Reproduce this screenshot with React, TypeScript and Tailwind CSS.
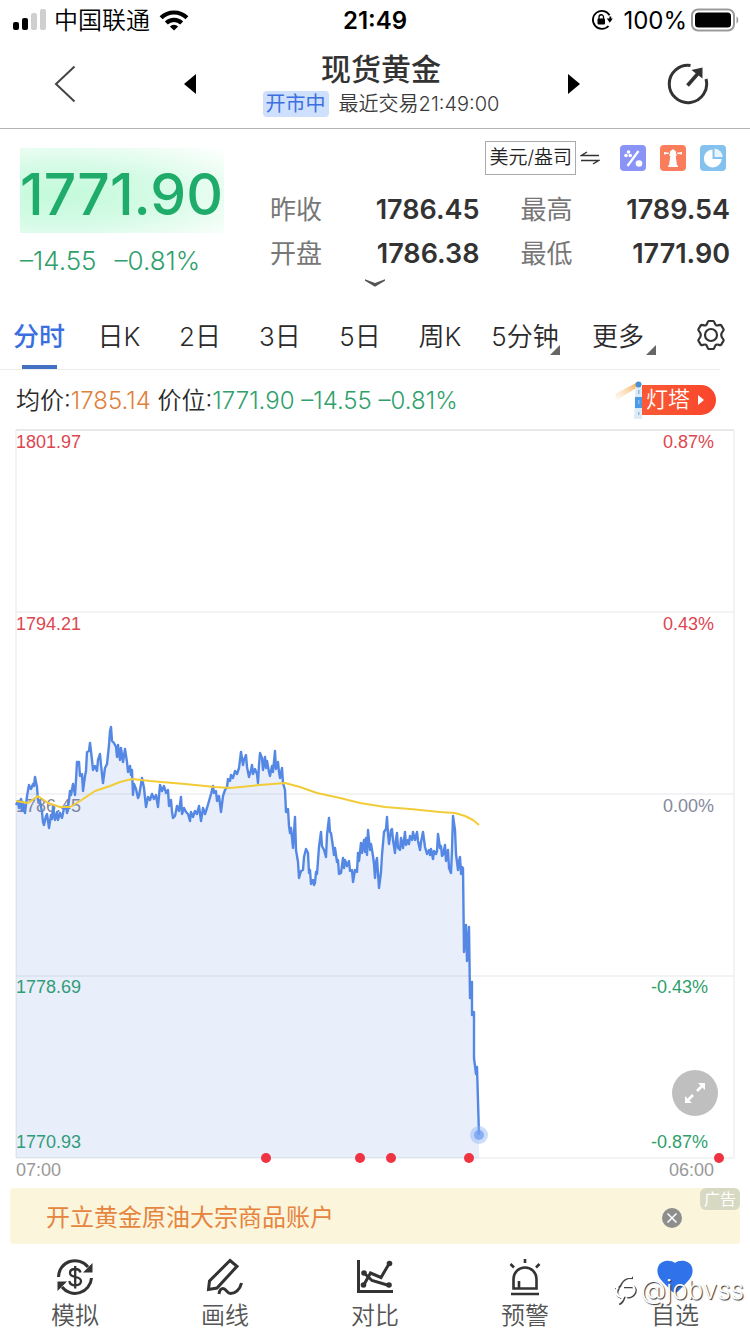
import type { ReactNode } from "react";

const FONT = "font-['Inter','Noto_Sans_CJK_SC',sans-serif]";
const CHART_FONT = "font-['Liberation_Sans',Arial,sans-serif]";

const PRICE: number[][] = [
  [16, 805], [18, 801], [19, 808], [21, 799], [22, 811], [23, 802], [25, 813], [27, 796], [29, 785], [31, 789], [33, 784], [34, 786], [35, 777], [37, 787], [38, 800], [40, 801],
  [42, 812], [43, 822], [44, 825], [46, 816], [47, 814], [49, 828], [51, 815], [52, 819], [53, 806], [55, 820], [57, 812], [58, 820], [60, 813], [62, 818], [64, 808], [66, 806],
  [67, 813], [69, 800], [70, 791], [71, 795], [73, 784], [75, 795], [76, 780], [77, 762], [79, 762], [80, 776], [82, 774], [83, 791], [85, 776], [86, 771], [87, 752], [89, 751],
  [90, 743], [92, 760], [93, 770], [95, 766], [97, 771], [98, 760], [100, 754], [101, 765], [103, 783], [105, 768], [107, 764], [109, 745], [110, 731], [111, 727], [112, 741], [114, 743],
  [116, 747], [117, 757], [118, 745], [120, 760], [121, 748], [123, 762], [125, 749], [127, 762], [128, 772], [130, 766], [131, 775], [132, 770], [133, 795], [134, 784], [136, 789], [138, 798],
  [139, 796], [142, 778], [144, 788], [146, 807], [148, 797], [150, 800], [152, 794], [154, 799], [156, 795], [158, 807], [160, 785], [162, 791], [164, 786], [166, 793], [168, 790], [169, 806],
  [171, 800], [172, 812], [173, 818], [175, 816], [177, 806], [179, 811], [181, 797], [182, 814], [184, 808], [186, 812], [188, 814], [190, 821], [191, 812], [193, 817], [195, 811], [197, 814],
  [199, 806], [201, 821], [203, 808], [205, 814], [207, 808], [209, 801], [211, 794], [213, 786], [214, 793], [216, 791], [217, 801], [219, 796], [221, 812], [223, 796], [225, 790], [227, 787],
  [228, 779], [230, 781], [231, 775], [233, 778], [235, 771], [237, 774], [239, 768], [241, 752], [243, 765], [244, 760], [246, 755], [247, 767], [249, 777], [251, 770], [252, 765], [253, 774],
  [255, 769], [257, 774], [258, 783], [259, 765], [260, 753], [262, 758], [263, 770], [265, 757], [266, 768], [267, 761], [269, 772], [270, 776], [272, 766], [273, 772], [275, 751], [276, 769],
  [278, 762], [279, 772], [280, 778], [282, 768], [283, 783], [285, 790], [286, 812], [288, 809], [289, 826], [290, 833], [291, 828], [293, 848], [295, 817], [296, 850], [298, 862], [299, 878],
  [301, 871], [303, 870], [304, 857], [306, 849], [308, 853], [309, 873], [310, 870], [311, 884], [313, 880], [314, 885], [315, 883], [316, 872], [317, 874], [319, 847], [321, 832], [322, 846],
  [324, 850], [326, 857], [327, 835], [329, 818], [330, 832], [331, 833], [333, 847], [334, 855], [335, 848], [337, 862], [338, 860], [339, 874], [341, 873], [343, 858], [344, 868], [345, 860],
  [347, 866], [349, 861], [350, 871], [352, 870], [353, 882], [355, 870], [357, 872], [358, 853], [359, 861], [361, 843], [362, 853], [364, 840], [365, 852], [366, 838], [367, 855], [368, 830],
  [370, 850], [371, 844], [373, 856], [374, 864], [375, 878], [376, 862], [377, 858], [378, 874], [379, 888], [381, 872], [382, 855], [384, 832], [386, 829], [387, 817], [388, 834], [389, 844],
  [391, 830], [392, 829], [393, 840], [395, 853], [396, 839], [397, 833], [398, 848], [400, 850], [401, 838], [403, 848], [405, 832], [406, 845], [408, 840], [409, 844], [410, 836], [412, 840],
  [413, 832], [415, 840], [417, 832], [418, 841], [420, 850], [421, 842], [423, 832], [425, 847], [427, 854], [429, 850], [430, 855], [431, 849], [433, 859], [434, 851], [436, 854], [437, 851],
  [438, 834], [440, 848], [441, 846], [442, 856], [443, 855], [445, 845], [446, 861], [448, 850], [449, 868], [451, 873], [452, 850], [453, 816], [455, 830], [456, 854], [458, 870], [459, 861],
  [460, 857], [461, 874], [462, 867], [463, 868], [464, 952], [466, 925], [467, 961], [469, 927], [470, 998], [472, 982], [472, 1015], [474, 1012], [474, 1058], [476, 1074], [477, 1067], [479, 1135],
];

const AVERAGE: number[][] = [
  [16, 801], [28, 803], [38, 796], [48, 803], [60, 807], [70, 807], [80, 801], [95, 791], [110, 786], [120, 782],
  [132, 779], [150, 781], [185, 784], [215, 787], [230, 788], [260, 785], [285, 783], [300, 787], [317, 793],
  [340, 798], [360, 803], [385, 807], [410, 809], [440, 812], [455, 813], [465, 816], [473, 820], [479, 825],
];

const toPath = (pts: number[][]) => "M" + pts.map((p) => p.join(" ")).join("L");

function StatusBar() {
  return (
    <div className="grid h-10 grid-cols-3 items-center text-2xl leading-8 text-black">
      <div className="flex items-center gap-2 pl-3">
        <svg width="34" height="22" viewBox="0 0 34 22" aria-hidden="true">
          <rect x="1" y="13" width="6" height="8" rx="2" />
          <rect x="10" y="9" width="6" height="12" rx="2" />
          <rect x="19" y="4" width="6" height="17" rx="2" fill="#cfcfcf" />
          <rect x="28" y="0" width="6" height="21" rx="2" fill="#cfcfcf" />
        </svg>
        <span className="pt-0.5 font-[350] whitespace-nowrap">中国联通</span>
        <svg width="32" height="22" viewBox="0 0 32 23" fill="none" stroke="#000" strokeWidth="4.4" aria-hidden="true">
          <path d="M2.5 9.2a19.2 19.2 0 0 1 27 0" />
          <path d="M8 14.6a11.400 11.400 0 0 1 16 0" />
          <path d="M16 22.500l-4.300-4.300a6.100 6.100 0 0 1 8.600 0z" fill="#000" stroke="none" />
        </svg>
      </div>
      <div className="pt-0.5 text-center font-semibold">21:49</div>
      <div className="flex items-center justify-end pr-2.5">
        <svg width="22" height="22" viewBox="0 0 22 22" className="mr-2.5" aria-hidden="true">
          <path d="M18.600 6.200A9 9 0 1 0 17.500 17" fill="none" stroke="#000" strokeWidth="1.800" />
          <path d="M19.300 7.500v3.500" stroke="#000" strokeWidth="1.800" />
          <path d="M15.800 9.500h6L18.800 13.800z" />
          <rect x="6.500" y="9.500" width="7.500" height="6" rx="1" />
          <path d="M8 10V8a2.250 2.250 0 0 1 4.500 0v2" fill="none" stroke="#000" strokeWidth="1.300" />
        </svg>
        <span className="pt-0.5">100%</span>
        <svg width="49" height="24" viewBox="0 0 49 24" className="ml-1" aria-hidden="true">
          <rect x="1" y="1.500" width="42" height="21" rx="6" fill="none" stroke="#9a9a9a" strokeWidth="2" />
          <rect x="4" y="4.500" width="36" height="15" rx="3.500" />
          <path d="M45.500 8.500c2.300.8 2.300 6.200 0 7z" fill="#9a9a9a" />
        </svg>
      </div>
    </div>
  );
}

function Header() {
  return (
    <header className="grid h-[89px] grid-cols-[130fr_120fr_260fr_128fr_112fr] items-center border-b border-[#b4b4b4]">
      <button aria-label="返回" className="flex justify-center">
        <svg width="22" height="38" viewBox="0 0 22 38" fill="none" stroke="#444" strokeWidth="2">
          <path d="M20.500 1.500L2 19l18.500 17.500" />
        </svg>
      </button>
      <button aria-label="上一个" className="flex justify-center">
        <svg width="12" height="20" viewBox="0 0 12 20"><path d="M12 0v20L0 10z" /></svg>
      </button>
      <div className="flex flex-col items-center gap-1 pl-0.5">
        <h1 className="text-[30px] leading-9 font-medium text-[#333]">现货黄金</h1>
        <div className="flex items-center gap-2.5 text-xl leading-[26px] whitespace-nowrap">
          <span className="rounded bg-[#cfe0fc] px-[3px] text-[#3d6fe0]">开市中</span>
          <span className="font-[350] text-[#3a3a3a]">最近交易21:49:00</span>
        </div>
      </div>
      <button aria-label="下一个" className="flex justify-center">
        <svg width="12" height="20" viewBox="0 0 12 20"><path d="M0 0v20l12-10z" /></svg>
      </button>
      <button aria-label="分享" className="flex justify-center pr-3">
        <svg width="42" height="42" viewBox="0 0 42 42" fill="none" stroke="#333" strokeWidth="3">
          <path d="M23.500 2.400A18.700 18.700 0 1 0 39 16" />
          <path d="M20.500 22.500L31 10.500" strokeWidth="3.600" />
          <path d="M35.500 4.500v11L24.500 7z" fill="#333" stroke="none" />
        </svg>
      </button>
    </header>
  );
}

function Stat({ label, value }: { label: string; value: string }) {
  return (
    <div className="flex h-11 items-center justify-between">
      <dt className="text-[26px] text-[#777]">{label}</dt>
      <dd className="pt-0.5 text-[27px] font-semibold text-[#333]">{value}</dd>
    </div>
  );
}

function Quote() {
  return (
    <section className="h-[171px]">
      <div className="flex justify-between pr-5 pl-5">
        <div className="pt-[19px]">
          <div className="flex h-[85px] w-[204px] items-center bg-[radial-gradient(ellipse_at_20%_55%,#c3fadb_0%,#d6fbe6_45%,#ffffff_100%)] pt-2 text-[57px] font-medium whitespace-nowrap text-[#1fab69]">
            1771.90
          </div>
          <div className="flex h-[54px] items-center gap-[18px] text-[26px] font-[350] whitespace-nowrap text-[#2fa06c]">
            <span>–14.55</span>
            <span>–0.81%</span>
          </div>
        </div>
        <div className="w-[460px] pt-3">
          <div className="mb-3 flex h-[34px] items-center justify-end pr-1">
            <button className="h-[34px] border border-[#aaa] px-[3px] text-[19px] font-[350] whitespace-nowrap text-[#222]">美元/盎司</button>
            <svg width="20" height="14" viewBox="0 0 20 14" className="mr-5 ml-1" fill="none" stroke="#333" strokeWidth="1.400" aria-hidden="true">
              <path d="M19 4.500H1.500L7 1M1 9.500h17.500L13 13" />
            </svg>
            <div className="flex gap-3.5">
              <svg width="26" height="26" viewBox="0 0 26 26" aria-hidden="true">
                <rect width="26" height="26" rx="4" fill="#8a94f7" />
                <path d="M7.500 21L18.500 6" stroke="#fff" strokeWidth="2.200" />
                <circle cx="8.500" cy="7" r="1.800" fill="#fff" />
                <circle cx="6" cy="10.500" r="1.800" fill="#fff" />
                <circle cx="10.300" cy="10.500" r="1.800" fill="#fff" />
                <circle cx="19" cy="18.500" r="3.300" fill="#fff" />
              </svg>
              <svg width="26" height="26" viewBox="0 0 26 26" aria-hidden="true">
                <rect width="26" height="26" rx="4" fill="#fa7e5c" />
                <path d="M10 6.500L13 4l3 2.500V9h.5v2h-.8L17 20.500h1V22H8v-1.500h1L10.300 11h-.8V9h.5z" fill="#fff" />
                <path d="M4 7l5 .8v1L4 9.500zM22 7l-5 .8v1l5 .7z" fill="#fff" />
              </svg>
              <svg width="26" height="26" viewBox="0 0 26 26" aria-hidden="true">
                <rect width="26" height="26" rx="4" fill="#85c1ee" />
                <path d="M12.500 4.500A9 9 0 1 0 21.800 14h-9.300z" fill="#fff" />
                <path d="M14.500 3.500a9 9 0 0 1 8.300 8.500h-8.300z" fill="#e8f4fd" />
              </svg>
            </div>
          </div>
          <dl className="grid grid-cols-2 gap-x-[41px]">
            <Stat label="昨收" value="1786.45" />
            <Stat label="最高" value="1789.54" />
            <Stat label="开盘" value="1786.38" />
            <Stat label="最低" value="1771.90" />
          </dl>
        </div>
      </div>
      <button aria-label="展开" className="mx-auto -mt-3 flex h-4 items-center">
        <svg width="20" height="8" viewBox="0 0 22 8"><path d="M0 0l11 4L22 0v1.500L11 8 0 1.500z" fill="#555" /></svg>
      </button>
    </section>
  );
}

const TABS = ["分时", "日K", "2日", "3日", "5日", "周K", "5分钟", "更多"];

function Tabs() {
  return (
    <nav className="mr-[30px] border-b border-[#ececec]">
      <div className="-mr-[30px] grid h-[69px] grid-cols-[78fr_82fr_80fr_80fr_80fr_80fr_90fr_96fr_84fr] text-[26px] font-[350] text-[#2a2a2a]">
        {TABS.map((t, i) => (
          <button key={t} className="relative flex items-center justify-center pt-1 whitespace-nowrap">
            <span className={i === 0 ? "font-medium text-[#3b6fe0]" : ""}>{t}</span>
            {i === 0 && <span className="absolute bottom-0 h-1 w-[35px] bg-[#4470c4]" />}
            {i > 5 && (
              <svg width="10" height="10" viewBox="0 0 10 10" className="absolute right-2.5 bottom-3.5" aria-hidden="true">
                <path d="M10 0v10H0z" fill="#666" />
              </svg>
            )}
          </button>
        ))}
        <button aria-label="设置" className="flex items-center justify-center pl-1.5">
          <svg width="32" height="32" viewBox="0 0 32 32" fill="none" stroke="#333" strokeWidth="2.200" strokeLinejoin="round">
            <path d="M13.500 2h5c1 0 1.200 3.500 2.600 4.300s4.300-1 5-.2l2.600 4.400c.5 1-2.500 2.600-2.500 5.500s3 4.500 2.500 5.500l-2.600 4.400c-.7.8-3.600-1-5-.2S19.500 30 18.500 30h-5c-1 0-1.200-3.500-2.600-4.300s-4.300 1-5 .2l-2.600-4.400c-.5-1 2.500-2.600 2.500-5.500s-3-4.500-2.500-5.500l2.600-4.400c.7-.8 3.600 1 5 .2S12.500 2 13.500 2z" />
            <circle cx="16" cy="16" r="6" />
          </svg>
        </button>
      </div>
    </nav>
  );
}

function Legend() {
  return (
    <div className="flex h-[60px] items-center justify-between pr-[34px] pl-4 text-2xl">
      <p className="pt-0.5 font-[350] whitespace-nowrap text-[#2a2a2a]">
        均价:<span className="text-[#e0803a]">1785.14</span> 价位:
        <span className="text-[#2fa06c]">1771.90 –14.55 –0.81%</span>
      </p>
      <button className="flex items-center">
        <svg width="28" height="38" viewBox="0 0 28 38" aria-hidden="true">
          <defs>
            <linearGradient id="beam" x1="1" y1="0" x2="0" y2="1">
              <stop offset="0" stopColor="#f7a94b" />
              <stop offset="1" stopColor="#fde9d4" stopOpacity="0.300" />
            </linearGradient>
          </defs>
          <path d="M24 1L1 13l2 6L24 6z" fill="url(#beam)" />
          <path d="M21.500 6h6.500v32h-8z" fill="#dcebf7" />
          <circle cx="24.500" cy="3.500" r="3" fill="#4c8fd0" />
          <path d="M21 16h7v11h-7z" fill="#4b9be8" />
          <path d="M24 9h1.500v4H24zM24 19h1.500v4H24zM24 31h1.500v3H24z" fill="#8fb9de" />
        </svg>
        <span className="flex h-[30px] items-center gap-2 rounded-r-full bg-linear-to-r from-[#fb5a35] to-[#f8452c] pr-3 pl-1 text-[22px] font-[350] text-white">
          灯塔
          <svg width="6" height="10" viewBox="0 0 6 10" aria-hidden="true"><path d="M0 0v10l6-5z" fill="#fff" /></svg>
        </span>
      </button>
    </div>
  );
}

function AxisRow({ left, right, color }: { left: string; right: string; color: string }) {
  return (
    <div className={`flex justify-between leading-[22px] ${color}`}>
      <span>{left}</span>
      <span>{right}</span>
    </div>
  );
}

function Chart() {
  const line = toPath(PRICE);
  return (
    <section className={`mx-4 text-lg ${CHART_FONT}`}>
      <div className="relative h-[728px]">
        <div className="grid h-full grid-rows-4 pt-px">
          <AxisRow left="1801.97" right="0.87%" color="pr-5 text-[#dd4650]" />
          <AxisRow left="1794.21" right="0.43%" color="pr-5 text-[#dd4650]" />
          <AxisRow left="1786.45" right="0.00%" color="pr-5 text-[#85889c]" />
          <div className="flex flex-col justify-between pb-[5px]">
            <AxisRow left="1778.69" right="-0.43%" color="pr-[26px] text-[#2fa06c]" />
            <AxisRow left="1770.93" right="-0.87%" color="pr-[26px] text-[#2fa06c]" />
          </div>
        </div>
        <svg viewBox="16 430 718 728" preserveAspectRatio="none" className="absolute inset-0 h-full w-full overflow-visible" aria-hidden="true">
          <path d="M16 612h718M16 794h718M16 976h718M16 1158h718M16 430v728M734 430v728" stroke="#f0f0f2" strokeWidth="1.500" fill="none" />
          <path d="M16 430h718" stroke="#e8e8ea" strokeWidth="2" />
          <path d={`${line}V1158H16Z`} fill="#5082dc" fillOpacity="0.130" />
          <path d={line} fill="none" stroke="#5488e4" strokeWidth="2.400" strokeLinejoin="round" />
          <path d={toPath(AVERAGE)} fill="none" stroke="#f2cc38" strokeWidth="2" strokeLinejoin="round" />
          <circle cx="479" cy="1135" r="9" fill="#8fb4f5" fillOpacity="0.450" />
          <circle cx="479" cy="1135" r="5" fill="#6c9bf0" fillOpacity="0.700" />
          {[266, 360, 391, 469, 719].map((x) => (
            <circle key={x} cx={x} cy="1158" r="5" fill="#ef3340" />
          ))}
        </svg>
        <button aria-label="全屏" className="absolute right-4 bottom-[42px] flex size-[46px] items-center justify-center rounded-full bg-[#bfbfbf]">
          <svg width="22" height="22" viewBox="0 0 22 22" fill="#fff" stroke="#fff">
            <path d="M13 9l5-5M9 13l-5 5" strokeWidth="2.600" />
            <path d="M21 1v7l-7-7zM1 21v-7l7 7z" stroke="none" />
          </svg>
        </button>
      </div>
      <div className="mb-2 flex h-[22px] justify-between pt-px pr-5 leading-[22px] text-[#999]">
        <span>07:00</span>
        <span>06:00</span>
      </div>
    </section>
  );
}

function Banner() {
  return (
    <aside className="relative mx-2.5 flex h-14 items-center justify-between rounded bg-[#fbf5dc] pt-1 pr-[58px] pl-9">
      <a href="#" className="text-2xl whitespace-nowrap text-[#e5853f]">开立黄金原油大宗商品账户</a>
      <button aria-label="关闭">
        <svg width="20" height="20" viewBox="0 0 20 20">
          <circle cx="10" cy="10" r="10" fill="#8e8e8c" />
          <path d="M5.500 5.500l9 9M14.500 5.500l-9 9" stroke="#fff" strokeWidth="1.500" />
        </svg>
      </button>
      <span className="absolute top-0 right-0 flex h-[22px] w-10 items-center justify-center rounded-md bg-[#d8d9c2] text-base text-white">广告</span>
    </aside>
  );
}

const ICON = { width: 38, height: 38, viewBox: "0 0 38 38", fill: "none", stroke: "#333", strokeWidth: 3 };

const NAV: { label: string; icon: ReactNode }[] = [
  {
    label: "模拟",
    icon: (
      <svg {...ICON} aria-hidden="true">
        <path d="M2.500 19A16.500 16.500 0 0 1 32 9M35.500 20A16.500 16.500 0 0 1 6 29" />
        <path d="M36.500 5v9.500H27zM1.500 33v-9.500H11z" fill="#333" stroke="none" />
        <path d="M24.500 14.500c-.6-2.400-2.700-3.500-5.300-3.500-3 0-5.200 1.400-5.200 4 0 5.600 11 2.400 11 8 0 2.800-2.400 4.300-5.700 4.300-3.200 0-5.500-1.500-6-4.300M19.200 8v22.500" strokeWidth="2.300" />
      </svg>
    ),
  },
  {
    label: "画线",
    icon: (
      <svg {...ICON} aria-hidden="true">
        <path d="M24 2.500l7 5.800L11 30l-8.500 1.500 1-8.500z" />
        <path d="M13 36c.5-3.500 2-5.500 4-5.500 3.500 0 3.500 5 7.500 5 4.500 0 9.500-3.500 11-10.500" />
      </svg>
    ),
  },
  {
    label: "对比",
    icon: (
      <svg {...ICON} aria-hidden="true">
        <path d="M2.500 2v31.500H37" />
        <path d="M7.500 27.500l7-12.500L25 19.500 33.500 5" />
        <path d="M8 15l8 7.500 17 5" />
        <circle cx="8" cy="15" r="2.800" fill="#333" stroke="none" />
        <circle cx="7.500" cy="27" r="2.800" fill="#333" stroke="none" />
        <circle cx="33.500" cy="5.500" r="2.800" fill="#333" stroke="none" />
        <circle cx="33" cy="27" r="2.800" fill="#333" stroke="none" />
      </svg>
    ),
  },
  {
    label: "预警",
    icon: (
      <svg {...ICON} strokeWidth={2.6} aria-hidden="true">
        <path d="M7.500 30.500V21a11.500 11.500 0 0 1 23 0v9.500zM5 36h28M13 30v-7M19 1v4M4.500 6l3.500 3.500M33.500 6L30 9.500" />
      </svg>
    ),
  },
  {
    label: "自选",
    icon: (
      <svg {...ICON} fill="#2f72ea" stroke="none" aria-hidden="true">
        <path d="M19 5C23 2 32 1.500 35.500 8c2.500 5 .5 11-3.500 15L22 33.500q-3 2.500-6 0L6 23C2 19 0 13 2.500 8 6 1.500 15 2 19 5z" />
      </svg>
    ),
  },
];

function BottomNav() {
  return (
    <nav className="relative grid h-[90px] grid-cols-5">
      {NAV.map(({ label, icon }) => (
        <a key={label} href="#" className="flex flex-col items-center gap-0.5 pt-3.5 text-2xl leading-9 font-[350] text-[#555]">
          {icon}
          {label}
        </a>
      ))}
      <div className="pointer-events-none absolute top-7 right-1.5 flex items-center gap-1 text-[26px] leading-9 font-light text-white [text-shadow:1px_1px_1px_#333]">
        <svg width="24" height="30" viewBox="0 0 24 30" fill="none" aria-hidden="true">
          <path d="M2 13c3 0 5-1 6-4 2-4 6-7 12-6M11 12h10c4 5-1 11-7 10M6 13c-4 5-1 10 5 10-1 3-2 5-5 6" stroke="#444" strokeWidth="2.500" />
          <path d="M1 12c3 0 5-1 6-4 2-4 6-7 12-6M10 11h10c4 5-1 11-7 10M5 12c-4 5-1 10 5 10-1 3-2 5-5 6" stroke="#fff" strokeWidth="2.200" />
        </svg>
        @jobvss
      </div>
    </nav>
  );
}

export default function App() {
  return (
    <main className={`min-h-screen w-full overflow-hidden bg-white ${FONT}`}>
      <StatusBar />
      <Header />
      <Quote />
      <Tabs />
      <Legend />
      <Chart />
      <Banner />
      <BottomNav />
    </main>
  );
}
